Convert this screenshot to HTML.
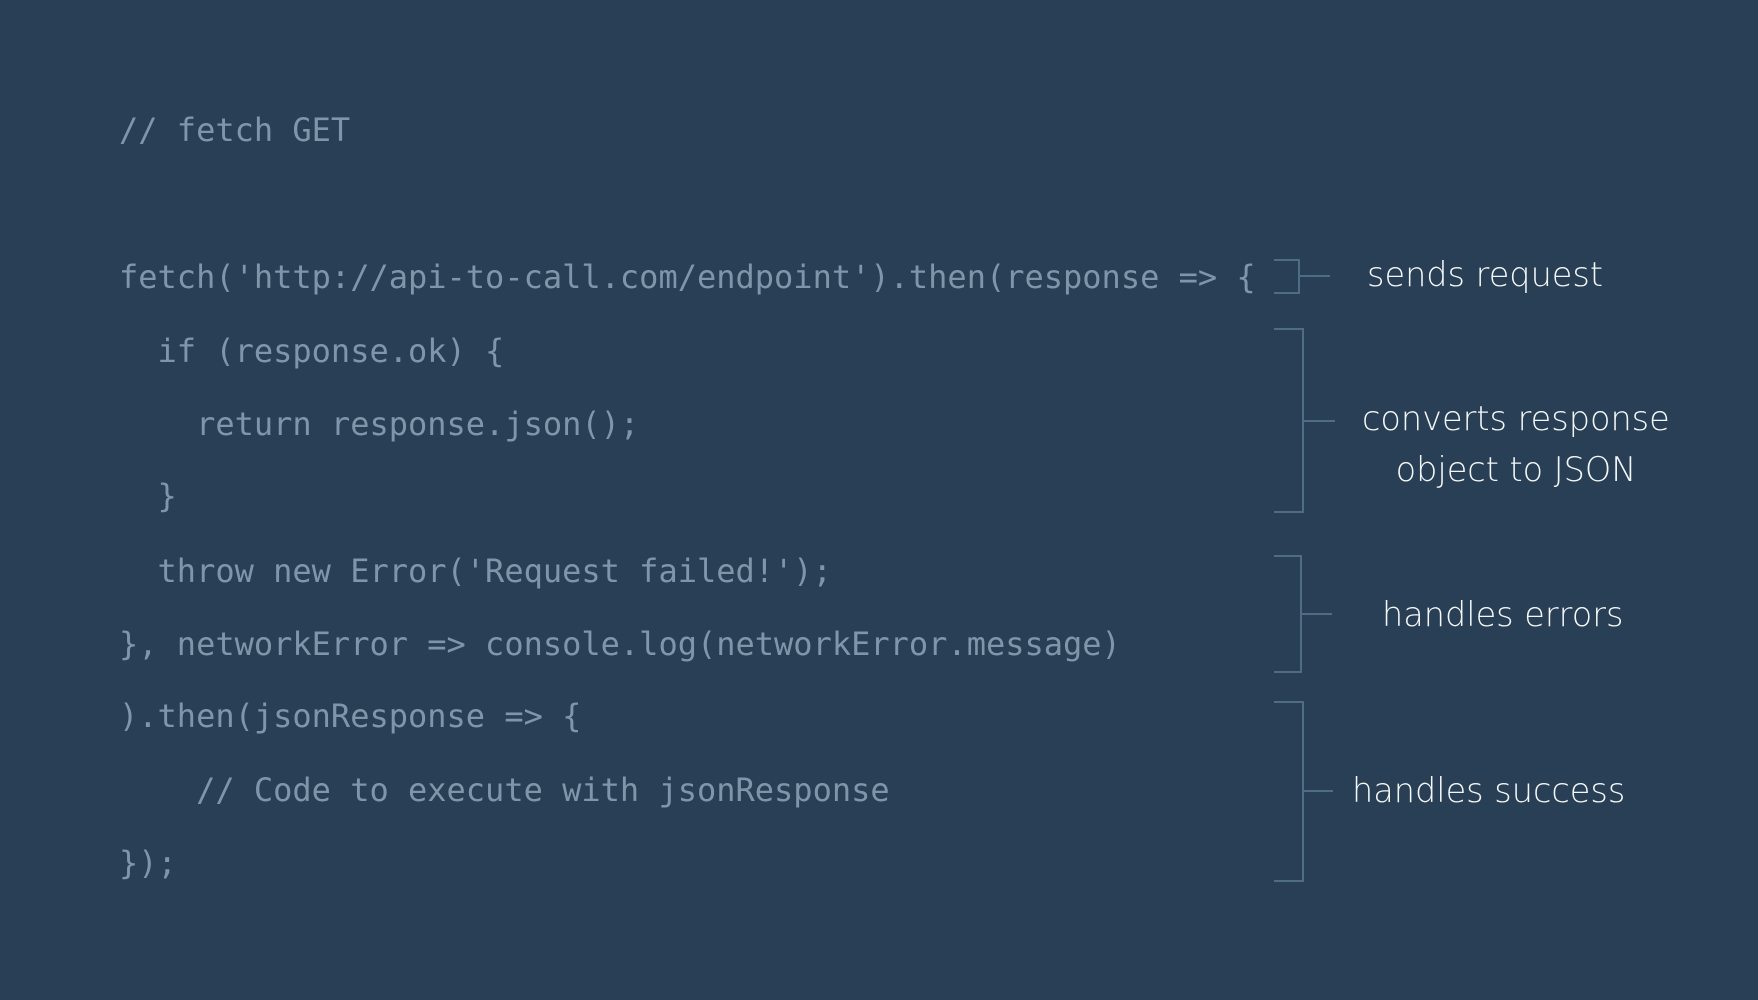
<!DOCTYPE html>
<html><head><meta charset="utf-8"><style>
html,body{margin:0;padding:0}
body{width:1758px;height:1000px;background:#293f55;position:relative;overflow:hidden}
.c{position:absolute;left:119px;font-family:"DejaVu Sans Mono","Liberation Mono",monospace;font-size:32px;color:#7e96aa;white-space:pre;line-height:40px}
.l{position:absolute;font-family:"DejaVu Sans","Liberation Sans",sans-serif;font-weight:300;font-size:33.5px;color:#f4f7f9;white-space:pre;line-height:40px;letter-spacing:0}
.b{position:absolute;border:2px solid #4f6c85;border-left:none;box-sizing:border-box}
.t{position:absolute;height:2px;background:#4f6c85}
</style></head><body>
<div class="c" style="top:110px">// fetch GET</div>
<div class="c" style="top:257px">fetch('http://api-to-call.com/endpoint').then(response => {</div>
<div class="c" style="top:331px">  if (response.ok) {</div>
<div class="c" style="top:404px">    return response.json();</div>
<div class="c" style="top:476px">  }</div>
<div class="c" style="top:551px">  throw new Error('Request failed!');</div>
<div class="c" style="top:624px">}, networkError => console.log(networkError.message)</div>
<div class="c" style="top:696px">).then(jsonResponse => {</div>
<div class="c" style="top:770px">    // Code to execute with jsonResponse</div>
<div class="c" style="top:843px">});</div>

<div class="b" style="left:1274px;top:259px;width:26px;height:35px"></div>
<div class="t" style="left:1300px;top:275px;width:30px"></div>
<div class="l" style="left:1367px;top:255px">sends request</div>

<div class="b" style="left:1274px;top:328px;width:30px;height:185px"></div>
<div class="t" style="left:1304px;top:420px;width:31px"></div>
<div class="l" style="left:1362px;top:399px;width:300px;text-align:center">converts response</div>
<div class="l" style="left:1366px;top:450px;width:300px;text-align:center">object to JSON</div>

<div class="b" style="left:1274px;top:555px;width:28px;height:118px"></div>
<div class="t" style="left:1302px;top:613px;width:30px"></div>
<div class="l" style="left:1382px;top:595px">handles errors</div>

<div class="b" style="left:1274px;top:701px;width:30px;height:181px"></div>
<div class="t" style="left:1304px;top:790px;width:29px"></div>
<div class="l" style="left:1352px;top:771px">handles success</div>
</body></html>
